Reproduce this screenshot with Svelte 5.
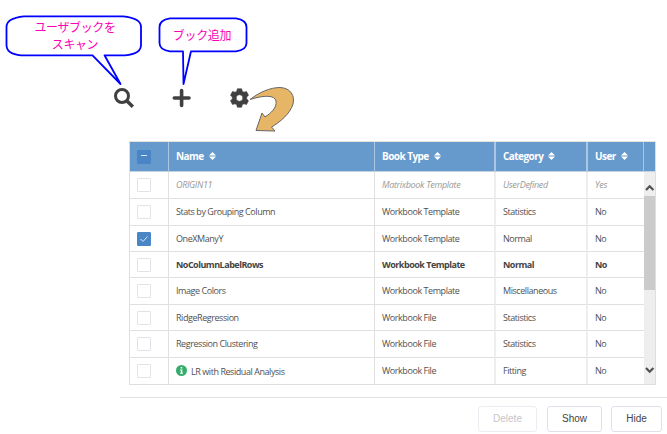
<script>
  const columns = ['Name', 'Book Type', 'Category', 'User'];
  const rows = [
    { name: 'ORIGIN11', type: 'Matrixbook Template', category: 'UserDefined', user: 'Yes', muted: true, h: 27 },
    { name: 'Stats by Grouping Column', type: 'Workbook Template', category: 'Statistics', user: 'No', h: 27 },
    { name: 'OneXManyY', type: 'Workbook Template', category: 'Normal', user: 'No', checked: true, h: 26 },
    { name: 'NoColumnLabelRows', type: 'Workbook Template', category: 'Normal', user: 'No', bold: true, h: 26 },
    { name: 'Image Colors', type: 'Workbook Template', category: 'Miscellaneous', user: 'No', h: 27 },
    { name: 'RidgeRegression', type: 'Workbook File', category: 'Statistics', user: 'No', h: 26 },
    { name: 'Regression Clustering', type: 'Workbook File', category: 'Statistics', user: 'No', h: 27 },
    { name: 'LR with Residual Analysis', type: 'Workbook File', category: 'Fitting', user: 'No', info: true, h: 27 }
  ];
</script>

<main>
  <div class="tools">
    <svg class="art" width="667" height="141" viewBox="0 0 667 141">
      <g fill="#fff" stroke="#0000ff" stroke-width="1.800" stroke-linejoin="round">
        <path d="M24 16.300H123Q141 18 141 27V45Q141 54 125 55.300H104.500L120.500 84L92.500 55.300H21Q6.500 54 6.500 45V27Q6.500 18 24 16.300Z" />
        <path d="M170 18.300H236Q246.500 20 246.500 27V43Q246.500 50 236 51.300H191L183.500 84L183 51.300H170Q159.500 50 159.500 43V27Q159.500 20 170 18.300Z" />
      </g>
      <g fill="none" stroke="#404040">
        <circle cx="122" cy="96" r="6.500" stroke-width="3" />
        <path d="M127 101L132.800 106.800" stroke-width="3.500" />
        <path d="M181.600 90.600V105.400M174.300 98H189" stroke-width="3.600" stroke-linecap="round" />
      </g>
      <path fill="#404040" stroke="#404040" stroke-width="0.600" stroke-linejoin="round" fill-rule="evenodd" d="M237.300 88.800H241.700L242.200 91.200L244 92.200L246.500 91.500L248.500 95.200L246.700 97V99L248.500 100.800L246.500 104.500L244 103.800L242.200 104.800L241.700 107.200H237.300L236.800 104.800L235 103.800L232.500 104.500L230.500 100.800L232.300 99V97L230.500 95.200L232.500 91.500L235 92.200L236.800 91.200ZM242.800 98A3.300 3.300 0 1 0 236.200 98A3.300 3.300 0 1 0 242.800 98Z" />
      <path fill="#e6b566" stroke="#666" stroke-width="1" stroke-linejoin="round" d="M250 99.500C259 92.500 270 87.500 280 87.500C291 88 295 96 293 104C290 114 280 122 271.500 127L275 131L256 130.500L262 113L265 117C271 113 277 108 276 101C275 95 264 95 250 99.500Z" />
    </svg>
    <div class="callout first"><span>ユーザブックを</span><span>スキャン</span></div>
    <div class="callout second">ブック追加</div>
  </div>

  <section class="grid">
    <div class="row header">
      <div class="cell check"><span class="box on"><svg width="14" height="14"><path d="M4 5.500H10" /></svg></span></div>
      {#each columns as c, i}
        <div class="cell c{i}"><span class="t">{c}</span>
          <svg class="sort" width="7" height="8" viewBox="0 0 7 8"><path fill="#fff" d="M0 3.400L3.500 0L7 3.400ZM0 4.600H7L3.500 8Z" /></svg>
        </div>
      {/each}
      <div class="cell end"></div>
    </div>
    <div class="body">
      <div class="rows">
        {#each rows as r}
          <div class="row" class:muted={r.muted} class:bold={r.bold} style="height:{r.h}px">
            <div class="cell check"><span class="box" class:on={r.checked}>{#if r.checked}<svg width="14" height="14"><path d="M3.500 7L6 9.500L10.500 4.500" /></svg>{/if}</span></div>
            <div class="cell c0">
              {#if r.info}<svg class="info" width="11" height="11" viewBox="0 0 11 11"><circle cx="5.500" cy="5.500" r="5.500" fill="#35ad6b" /><path d="M4.700 2H6.300V3.500H4.700ZM4.200 4.500H6.300V7.800H7V8.800H4.200V7.800H4.800V5.500H4.200Z" fill="#fff" /></svg>{/if}
              <span class="t" class:low={r.info}>{r.name}</span>
            </div>
            <div class="cell c1"><span class="t">{r.type}</span></div>
            <div class="cell c2"><span class="t">{r.category}</span></div>
            <div class="cell c3"><span class="t">{r.user}</span></div>
          </div>
        {/each}
      </div>
      <div class="scroll">
        <svg width="11" height="24" viewBox="0 0 11 24"><path d="M2 18L5.700 14.300L9.400 18" /></svg>
        <div class="thumb"></div>
        <svg class="down" width="11" height="20" viewBox="0 0 11 20"><path d="M2 4L5.700 7.700L9.400 4" /></svg>
      </div>
    </div>
  </section>

  <footer>
    <button class="delete" disabled>Delete</button>
    <button class="show">Show</button>
    <button class="hide">Hide</button>
  </footer>
</main>

<style>
  :global(body) { background: #fff; }
  main { width: 667px; height: 434px; overflow: hidden; position: relative; font-family: "Open Sans", "Noto Sans", sans-serif; }
  main * { box-sizing: border-box; }
  .tools { position: relative; height: 141px; }
  .art { display: block; }
  .callout { position: absolute; color: #ff00b4; font: 400 12px/17px "Noto Sans CJK JP", sans-serif; text-align: center; white-space: nowrap; }
  .first { left: 7px; top: 18px; width: 136px; display: flex; flex-direction: column; letter-spacing: -0.4px; }
  .second { left: 159px; top: 26px; width: 86px; letter-spacing: -0.3px; }
  .grid { width: 527px; height: 244px; margin-left: 129px; border: 1px solid #dcdfe0; border-top-color: #e5e3dd; }
  .row { display: flex; }
  .cell { display: flex; align-items: center; border-right: 1px solid #e0e0e0; border-bottom: 1px solid #e0e0e0; padding-left: 7px; font-size: 9px; line-height: 12px; color: #505050; white-space: nowrap; flex: none; }
  .check { width: 39px; padding-left: 7px; }
  .c0 { width: 206px; }
  .c1 { width: 121px; border-right: 2px solid #eee; }
  .c2 { width: 92px; border-right: 2px solid #eee; }
  .c3 { width: 56px; }
  .t { letter-spacing: -0.44px; }
  .header { height: 30px; }
  .header .cell { background: #6699cc; color: #fff; font-weight: 700; font-size: 10px; border-right-color: #a9c6e3; border-bottom-color: #c4d3e1; padding-bottom: 1px; }
  .header .t { letter-spacing: -0.55px; }
  .end { flex: 1; padding: 0; }
  .header .end { border-right: 0; }
  .sort { margin-left: 5px; }
  .box { display: flex; width: 14px; height: 14px; border: 1px solid #e1e3e8; border-radius: 1px; background: #fff; }
  .box.on { background: #4a86c5; border-color: #4a86c5; }
  .box svg { margin: -1px; fill: none; stroke: #d5e7f7; stroke-width: 1; }
  .header .check { padding-top: 1px; padding-bottom: 0; }
  .muted .t { color: #999; font-style: italic; letter-spacing: -0.33px; }
  .bold .t { color: #444; font-weight: 700; letter-spacing: -0.5px; }
  .info { margin: 0 4px 1px 0; }
  .low { padding-top: 1px; }
  .body { display: flex; height: 212px; }
  .rows { width: 514px; overflow: hidden; }
  .rows .c3 { border-right: 0; }
  .scroll { width: 11px; background: #eee; display: flex; flex-direction: column; }
  .scroll svg { fill: none; stroke: #505050; stroke-width: 2.2; flex: none; }
  .thumb { height: 94px; background: #cbcbcb; }
  .scroll .down { margin-top: auto; }
  footer { margin: 12px 0 0 120px; height: 37px; border-top: 1px solid #e2e2e2; display: flex; padding-top: 8px; }
  button { height: 26px; padding: 0; border: 1px solid #e0e0eb; border-radius: 3px; background: #fff; color: #444; font: 10px/24px "Liberation Sans", Arial, sans-serif; }
  .delete { width: 59px; margin-left: 358px; color: #c5c5ca; border-color: #ececf2; }
  .show { width: 55px; margin-left: 10px; }
  .hide { width: 51px; margin-left: 9px; }
</style>
